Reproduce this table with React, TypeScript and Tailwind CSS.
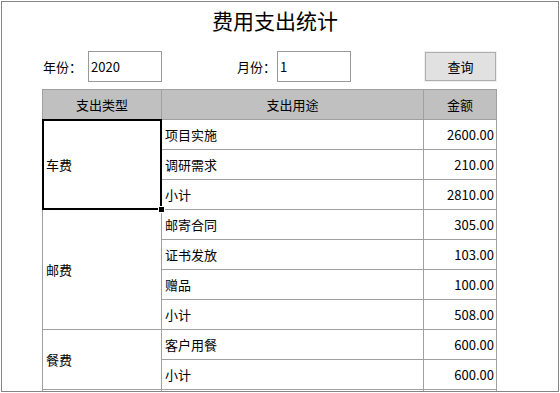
const rows = [
  { type: '车费', span: 3, items: [['项目实施', '2600.00'], ['调研需求', '210.00'], ['小计', '2810.00']] },
  { type: '邮费', span: 4, items: [['邮寄合同', '305.00'], ['证书发放', '103.00'], ['赠品', '100.00'], ['小计', '508.00']] },
  { type: '餐费', span: 2, items: [['客户用餐', '600.00'], ['小计', '600.00']] },
  { type: '', span: 1, items: [['', '']] },
]

const font = { fontFamily: '"Microsoft YaHei", "Noto Sans CJK SC", "Noto Sans", sans-serif' }

export default function App() {
  return (
    <div className="bg-white w-[560px] h-[393px] overflow-hidden" style={font}>
      <div className="ml-px mt-px w-[558px] h-[391px] border border-[#858585] overflow-hidden">
        <h1 className="text-center text-[21px] leading-none text-black pt-[8px] pr-[10px] h-[49px]">费用支出统计</h1>

        <div className="flex items-center h-[31px] text-[13px] text-black">
          <span className="ml-[41px] w-[45px]">年份：</span>
          <div className="w-[74px] h-[31px] border border-[#999999] flex items-center pl-[2px]">2020</div>
          <span className="ml-[75px] w-[40px]">月份：</span>
          <div className="w-[74px] h-[31px] border border-[#999999] flex items-center pl-[2px]">1</div>
          <button className="ml-[74px] w-[71px] h-[29px] bg-[#e1e1e1] border border-[#adadad] outline outline-1 outline-[#f0f0f0] text-[13px]">
            查询
          </button>
        </div>

        <table className="ml-[40px] mt-[7px] border-collapse table-fixed text-[13px] text-black">
          <colgroup>
            <col className="w-[119px]" />
            <col className="w-[262px]" />
            <col className="w-[73px]" />
          </colgroup>
          <thead>
            <tr className="h-[30px] bg-[#c0c0c0]">
              <th className="border border-[#a0a0a0] font-normal p-0">支出类型</th>
              <th className="border border-[#a0a0a0] font-normal p-0">支出用途</th>
              <th className="border border-[#a0a0a0] font-normal p-0">金额</th>
            </tr>
          </thead>
          <tbody>
            {rows.map((g, gi) =>
              g.items.map((it, ii) => (
                <tr key={`${gi}-${ii}`} className="h-[30px]">
                  {ii === 0 && (
                    <td rowSpan={g.span} className="relative border border-[#a0a0a0] p-0 pl-[3px] align-middle">
                      {g.type}
                      {gi === 0 && (
                        <div className="absolute -left-px -top-px -right-px -bottom-px border-2 border-black">
                          <div className="absolute -right-[4px] -bottom-[4px] w-[5px] h-[5px] bg-black outline outline-1 outline-white" />
                        </div>
                      )}
                    </td>
                  )}
                  <td className="border border-[#a0a0a0] p-0 pl-[3px]">{it[0]}</td>
                  <td className="border border-[#a0a0a0] p-0 pr-[2px] text-right">{it[1]}</td>
                </tr>
              ))
            )}
          </tbody>
        </table>
      </div>
    </div>
  )
}
